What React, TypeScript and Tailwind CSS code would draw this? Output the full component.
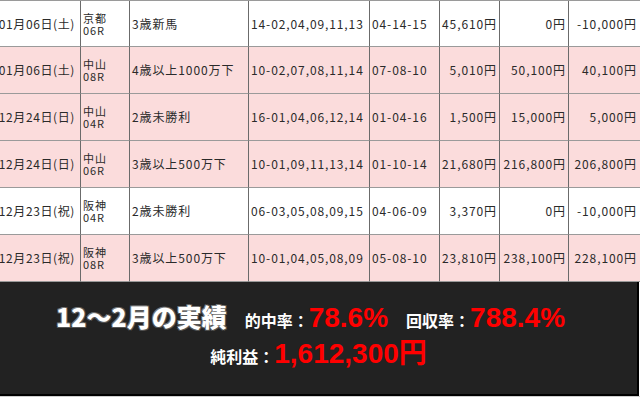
import React from "react";

type Row = {
  date: string;
  place: string;
  race: string;
  name: string;
  buy: string;
  result: string;
  odds: string;
  pay: string;
  profit: string;
  pink: boolean;
};

const rows: Row[] = [
  { date: "01月06日(土)", place: "京都", race: "06R", name: "3歳新馬", buy: "14-02,04,09,11,13", result: "04-14-15", odds: "45,610円", pay: "0円", profit: "-10,000円", pink: false },
  { date: "01月06日(土)", place: "中山", race: "08R", name: "4歳以上1000万下", buy: "10-02,07,08,11,14", result: "07-08-10", odds: "5,010円", pay: "50,100円", profit: "40,100円", pink: true },
  { date: "12月24日(日)", place: "中山", race: "04R", name: "2歳未勝利", buy: "16-01,04,06,12,14", result: "01-04-16", odds: "1,500円", pay: "15,000円", profit: "5,000円", pink: true },
  { date: "12月24日(日)", place: "中山", race: "06R", name: "3歳以上500万下", buy: "10-01,09,11,13,14", result: "01-10-14", odds: "21,680円", pay: "216,800円", profit: "206,800円", pink: true },
  { date: "12月23日(祝)", place: "阪神", race: "04R", name: "2歳未勝利", buy: "06-03,05,08,09,15", result: "04-06-09", odds: "3,370円", pay: "0円", profit: "-10,000円", pink: false },
  { date: "12月23日(祝)", place: "阪神", race: "08R", name: "3歳以上500万下", buy: "10-01,04,05,08,09", result: "05-08-10", odds: "23,810円", pay: "238,100円", profit: "228,100円", pink: true },
];

const cell = "flex items-center border-r border-b border-r-[#6b6b6b] border-b-[#9a9a9a] overflow-hidden whitespace-nowrap";

export default function App() {
  return (
    <div className="w-[640px] h-[399px] overflow-hidden bg-white text-[#2a2a2a] [font-family:'Noto_Sans_CJK_JP','Noto_Sans',sans-serif]">
      <div className="grid grid-cols-[81px_49px_119px_121px_70px_60px_69px_71px] border-t border-t-[#9a9a9a] text-[12px] tracking-[0.9px]">
        {rows.map((r, i) => {
          const bg = r.pink ? "bg-[#fbdcdc]" : "bg-white";
          const h = i === 0 ? "h-[46px]" : "h-[47px]";
          return (
            <React.Fragment key={i}>
              <div className={`${cell} ${bg} ${h} justify-end pr-[5px] tracking-[0.6px]`}>{r.date}</div>
              <div className={`${cell} ${bg} ${h} pl-[2px]`}>
                <div className="flex flex-col text-[11px] leading-[12px]">
                  <span>{r.place}</span>
                  <span>{r.race}</span>
                </div>
              </div>
              <div className={`${cell} ${bg} ${h} pl-[2px]`}>{r.name}</div>
              <div className={`${cell} ${bg} ${h} pl-[2px]`}>{r.buy}</div>
              <div className={`${cell} ${bg} ${h} pl-[2px]`}>{r.result}</div>
              <div className={`${cell} ${bg} ${h} justify-end pr-[2px]`}>{r.odds}</div>
              <div className={`${cell} ${bg} ${h} justify-end pr-[2px]`}>{r.pay}</div>
              <div className={`${cell} ${bg} ${h} justify-end pr-[3px] border-r-0`}>{r.profit}</div>
            </React.Fragment>
          );
        })}
      </div>

      <div className="w-[639px] h-[114px] bg-[#222222] border-r-2 border-b-2 border-black flex flex-col items-center justify-center gap-[2px] pb-[4px]">
        <div className="flex items-baseline gap-[18px] pr-[16px]">
          <span className="text-[25px] font-black text-white leading-none [text-shadow:1px_1px_0_#555,-1px_-1px_0_#777,1px_-1px_0_#555,-1px_1px_0_#555]">
            12〜2月の実績
          </span>
          <span className="flex items-baseline">
            <span className="text-[16px] font-bold text-white leading-none">的中率：</span>
            <span className="text-[28px] font-bold text-[#ff0000] leading-none [font-family:'Liberation_Sans',sans-serif]">78.6%</span>
          </span>
          <span className="flex items-baseline">
            <span className="text-[16px] font-bold text-white leading-none">回収率：</span>
            <span className="text-[28px] font-bold text-[#ff0000] leading-none [font-family:'Liberation_Sans',sans-serif]">788.4%</span>
          </span>
        </div>
        <div className="flex items-baseline mt-[6px]">
          <span className="text-[16px] font-bold text-white leading-none">純利益：</span>
          <span className="text-[28px] font-bold text-[#ff0000] leading-none [font-family:'Liberation_Sans','Noto_Sans_CJK_JP',sans-serif]">1,612,300円</span>
        </div>
      </div>
      <div className="w-[640px] h-[1px] bg-[#cfcfcf]" />
    </div>
  );
}
